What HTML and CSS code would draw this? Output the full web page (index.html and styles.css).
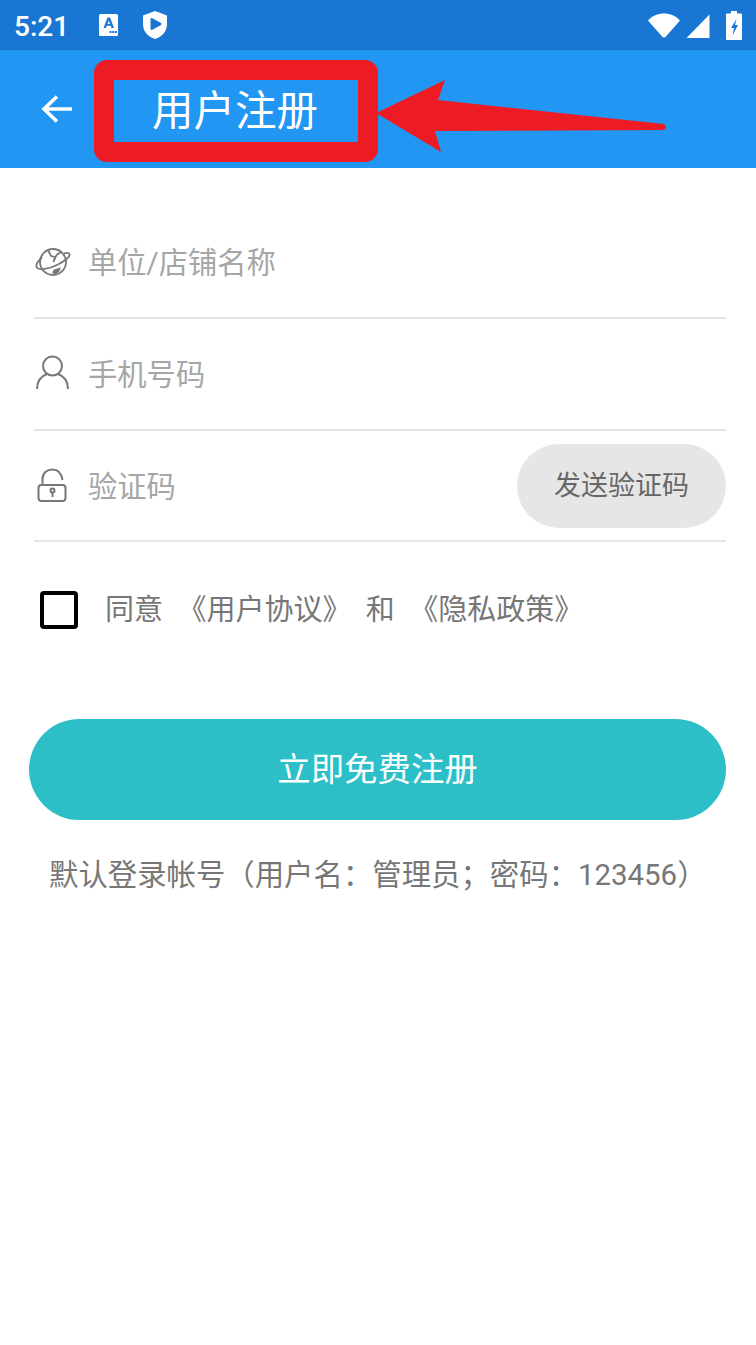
FILE: index.html
```html
<!DOCTYPE html>
<html lang="zh">
  <head>
    <meta charset="utf-8">
    <title>用户注册</title>
    <link rel="stylesheet" href="styles.css">
  </head>

  <body>
    <div class="status_bar">
      <span class="clock">5:21</span>
      <svg class="ic_a" width="20" height="24" viewBox="0 0 20 24">
        <rect x="0" y="1" width="19" height="22" rx="1.5" fill="#fff"/>
        <path d="M4.500 15 L8.500 4.500 H11 L15 15 H12.500 L11.700 12.800 H7.800 L7 15 Z M8.500 11 H11 L9.750 7.500 Z" fill="#1976d2"/>
        <path d="M10.500 18h2v2h-2zM13.200 18h2v2h-2zM15.900 18h2v2h-2z" fill="#1976d2"/>
      </svg>
      <svg class="ic_shield" width="24" height="30" viewBox="0 0 24 30">
        <path d="M12 1 L24 5.500 V14 C24 21.500 19 26.800 12 29 C5 26.800 0 21.500 0 14 V5.500 Z" fill="#fff"/>
        <path d="M7.500 9.500 Q7.500 7.500 9.500 8.300 L18 13 Q19.500 14 18 15 L9.500 19.800 Q7.500 20.500 7.500 18.500 Z" fill="#1976d2"/>
      </svg>
      <span class="spacer"></span>
      <svg class="ic_wifi" width="32" height="25" viewBox="0 0 32 25">
        <path d="M0 7.500 C4 3 10 0.500 16 0.500 C22 0.500 28 3 32 7.500 L17.500 24 Q16 25 14.500 24 Z" fill="#fff"/>
      </svg>
      <svg class="ic_signal" width="24" height="24" viewBox="0 0 24 24">
        <path d="M23.500 0.500 V24 H0.500 Z" fill="#fff"/>
      </svg>
      <svg class="ic_battery" width="16" height="29" viewBox="0 0 16 29">
        <path d="M5 0 H11 V2.500 H15 Q16 2.500 16 3.500 V28 Q16 29 15 29 H1 Q0 29 0 28 V3.500 Q0 2.500 1 2.500 H5 Z" fill="#fff"/>
        <path d="M10.500 8 L5 17 H8 L6.500 24.500 L12 14 H9 Z" fill="#1976d2"/>
      </svg>
    </div>

    <div class="toolbar">
      <svg class="back" width="36" height="36" viewBox="0 0 36 36">
        <path d="M33 18 H5 M18 5.500 L5 18 L18 30.500" fill="none" stroke="#fff" stroke-width="3.600"/>
      </svg>
      <span class="title">用户注册</span>
    </div>

    <!-- red markup drawn over the toolbar -->
    <svg class="markup" width="756" height="170" viewBox="0 0 756 170">
      <rect x="104" y="70" width="264" height="82" rx="3" fill="none" stroke="#ed1c24" stroke-width="20"/>
      <path d="M376 113 L445 80 L438 100 L664 124 Q668 127 664 130 L435 131 L441 152 Z" fill="#ed1c24"/>
    </svg>

    <div class="form">
      <div class="row">
        <svg class="row_icon" width="38" height="34" viewBox="0 0 38 34">
          <g fill="none" stroke="#777" stroke-width="1.800">
            <circle cx="20" cy="17" r="13"/>
            <path d="M9 12.500 C4.500 16.500 2.500 20.500 4 22.800 C6 25.500 16 24 24 20 C32 16 37.500 11.500 36.500 9 C36 7.800 34 7.500 31 8.500"/>
            <path d="M15 5 L18 11 L22 12 L20.500 17 L23.500 10 L28 7"/>
          </g>
          <path d="M19 27.500 L21 24.500 L28 22.500 L26 27 L22 29.500 Z" fill="#777"/>
        </svg>
        <span class="hint">单位/店铺名称</span>
      </div>
      <div class="row">
        <svg class="row_icon row_icon_user" width="38" height="36" viewBox="0 0 38 36">
          <g fill="none" stroke="#777" stroke-width="2">
            <circle cx="19.500" cy="12" r="9.500"/>
            <path d="M4 35 C4 27 8.500 22 14 20 M35 35 C35 27 30.500 22 25 20"/>
          </g>
        </svg>
        <span class="hint">手机号码</span>
      </div>
      <div class="row row_code">
        <svg class="row_icon row_icon_lock" width="38" height="34" viewBox="0 0 38 34">
          <g fill="none" stroke="#777" stroke-width="2">
            <rect x="5.500" y="17" width="27" height="16" rx="3"/>
            <path d="M9.500 17 V11 C9.500 5 14 1.500 19.500 1.500 C25 1.500 28.500 5.500 29.500 12"/>
            <circle cx="19.500" cy="22.500" r="2"/>
            <path d="M19.500 24.500 V29"/>
          </g>
        </svg>
        <span class="hint">验证码</span>
        <span class="send_code">发送验证码</span>
      </div>
    </div>

    <div class="agree">
      <span class="checkbox"></span>
      <span class="agree_text">同意  《用户协议》  和  《隐私政策》</span>
    </div>

    <div class="submit">立即免费注册</div>

    <div class="note">默认登录帐号（用户名：管理员；密码：123456）</div>
  </body>
</html>
```

FILE: styles.css
```css
html {
  height: 100%;
  background-color: #fff;
}

body {
  margin: 0;
  position: relative;
  font-family: "Roboto", "Noto Sans CJK SC", sans-serif;
}

.status_bar {
  height: 50px;
  box-sizing: border-box;
  padding: 0 14px;
  display: flex;
  align-items: center;
  background-color: #1976d2;
  color: #fff;
}
.clock {
  width: 85px;
  margin-top: 2px;
  font-size: 28px;
  font-weight: 500;
}
.ic_shield {
  margin-left: 24px;
}
.spacer {
  flex: 1;
}
.ic_signal {
  margin-left: 6px;
  margin-top: 2px;
}
.ic_battery {
  margin-left: 16px;
}

.toolbar {
  height: 118px;
  display: flex;
  align-items: center;
  background-color: #2196f3;
  color: #fff;
}
.back {
  margin-left: 39px;
  margin-top: -1px;
}
.title {
  margin-left: 77px;
  margin-top: -2px;
  font-size: 41.5px;
}

.markup {
  position: absolute;
  left: 0;
  top: 0;
}

.form {
  margin: 39px 30px 0 34px;
}
.row {
  height: 110px;
  display: flex;
  align-items: center;
  border-bottom: 2px solid #e6e6e6;
}
.row_code {
  height: 109px;
}
.row_icon {
  margin-left: -1px;
  margin-right: 17px;
  flex: none;
}
.row_icon_user {
  margin-top: -4px;
}
.row_icon_lock {
  margin-top: -2px;
}
.hint {
  flex: 1;
  margin-top: -4px;
  font-size: 29.3px;
  color: #a6a6a6;
}
.send_code {
  width: 209px;
  height: 84px;
  line-height: 84px;
  text-align: center;
  border-radius: 42px;
  background-color: #e6e6e6;
  color: #666;
  font-size: 27px;
}

.agree {
  margin: 49px 0 0 40px;
  display: flex;
  align-items: center;
}
.checkbox {
  width: 38px;
  height: 38px;
  box-sizing: border-box;
  border: 4px solid #000;
  border-radius: 4px;
}
.agree_text {
  margin-left: 27px;
  margin-top: -6px;
  font-size: 29px;
  color: #777;
  white-space: pre;
}

.submit {
  margin: 90px 30px 0 29px;
  height: 101px;
  line-height: 101px;
  text-align: center;
  border-radius: 51px;
  background-color: #2dbfc8;
  color: #fff;
  font-size: 33.4px;
}

.note {
  margin: 31px 0 0 49px;
  font-size: 29.4px;
  color: #777;
  white-space: nowrap;
}
```
